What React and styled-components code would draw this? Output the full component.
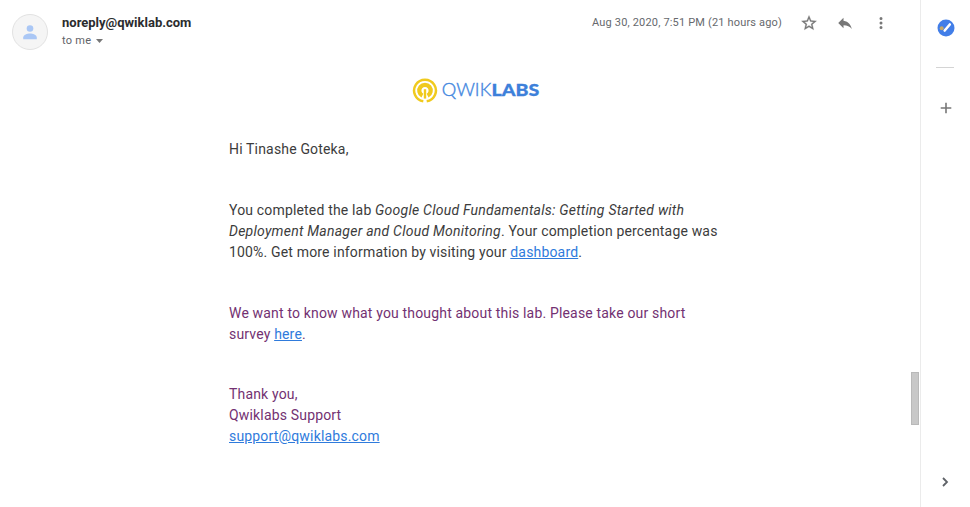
import React from "react";
import styled, { createGlobalStyle } from "styled-components";

const GlobalStyle = createGlobalStyle`
  * { box-sizing: border-box; }
  body { margin: 0; background: #fff; overflow: hidden; }
`;

const Page = styled.div`
  display: grid;
  grid-template-columns: 1fr 9px 50px;
  width: 970px;
  height: 507px;
  font-family: Roboto, sans-serif;
  background: #fff;
`;

const Message = styled.main`
  display: flex;
  flex-direction: column;
  min-width: 0;
`;

const Header = styled.header`
  display: flex;
  align-items: flex-start;
  height: 78px;
  padding: 14px 21px 0 12px;
`;

const Avatar = styled.div`
  display: grid;
  place-items: center;
  width: 36px;
  height: 36px;
  border: 1px solid #e2e2e2;
  border-radius: 50%;
  background: #f5f5f5;
`;

const Sender = styled.div`
  margin-left: 14px;
  flex: 1;
`;

const Address = styled.div`
  font-size: 13px;
  font-weight: 700;
  line-height: 18px;
  color: #2b2c2e;
`;

const Recipient = styled.div`
  display: flex;
  align-items: center;
  gap: 5px;
  font-size: 11px;
  line-height: 17px;
  letter-spacing: 0.25px;
  color: #5f6368;
`;

const Tools = styled.div`
  display: flex;
  align-items: center;
  height: 18px;
`;

const DateText = styled.span`
  margin-right: 18px;
  font-size: 11px;
  letter-spacing: 0.17px;
  line-height: 16px;
  color: #66696d;
  white-space: nowrap;
`;

const IconButton = styled.button`
  display: grid;
  place-items: center;
  width: 18px;
  height: 18px;
  margin: 0 0 0 ${(p) => p.$gap || "0"};
  padding: 0;
  border: 0;
  background: none;
  color: #777;
`;

const Logo = styled.div`
  display: flex;
  height: 25px;
  margin-left: 412px;
`;

const Body = styled.article`
  width: 500px;
  margin: 36px 0 0 229px;
  font-size: 14px;
  line-height: 21px;
  letter-spacing: 0.17px;
  color: #3c3c3c;
`;

const Paragraph = styled.p`
  margin: 0 0 ${(p) => p.$after || "40px"};
  color: ${(p) => (p.$quoted ? "#733172" : "#3c3c3c")};
`;

const LabTitle = styled.em`
  letter-spacing: 0.24px;
`;

const Link = styled.a`
  color: #2f7bdc;
  text-decoration: underline;
`;

const ScrollTrack = styled.div`
  padding: 372px 1px 0 0;
`;

const ScrollThumb = styled.div`
  height: 53px;
  border: 1px solid #b9b9b9;
  background: #c8c8c8;
`;

const SidePanel = styled.aside`
  display: flex;
  flex-direction: column;
  align-items: center;
  padding: 19px 0 16px;
  border-left: 1px solid #ebebeb;
`;

const Divider = styled.div`
  width: 18px;
  height: 1px;
  margin: 30px 1px 31px 0;
  background: #d4d4d4;
`;

const PanelToggle = styled(IconButton)`
  margin-top: auto;
  color: #5f6368;
`;

function PersonIcon() {
  return (
    <svg width="20" height="20" viewBox="0 0 20 20" fill="#aac7f5">
      <circle cx="10" cy="6.5" r="3.3" />
      <path d="M3.2 17.2v-1.6c0-2.7 4.2-4.1 6.8-4.1s6.8 1.4 6.8 4.1v1.6z" />
    </svg>
  );
}

function QwiklabsLogo() {
  return (
    <svg width="130" height="25" viewBox="0 0 130 25">
      <g fill="none" stroke="#f0ca1d">
        <path d="M11.3 23.3A10.9 10.9 0 1 1 14.7 23.3" strokeWidth="2.5" />
        <path d="M10.4 17.6A5.7 5.7 0 1 1 15.6 17.6" strokeWidth="4.2" />
        <path d="M13 11.2v9.4" strokeWidth="2.4" />
      </g>
      <text x="29.8" y="18.2" fill="#4689df" fontFamily="Lato, sans-serif" fontWeight="300" stroke="#4689df" strokeWidth="0.4" fontSize="17.5" textLength="49.5" lengthAdjust="spacingAndGlyphs">QWIK</text>
      <text x="79.6" y="18.2" fill="#3d80da" fontFamily="Lato, sans-serif" fontWeight="900" stroke="#3d80da" strokeWidth="0.3" fontSize="17.5" textLength="47.7" lengthAdjust="spacingAndGlyphs">LABS</text>
    </svg>
  );
}

function TasksIcon() {
  return (
    <svg width="18" height="18" viewBox="0 0 18 18">
      <circle cx="9" cy="9" r="8.5" fill="#427ee8" />
      <path d="M7.7 11.5l5.1-6" stroke="#fff" strokeWidth="2.6" strokeLinecap="round" />
      <circle cx="4.7" cy="9.2" r="2" fill="#c5a96a" />
    </svg>
  );
}

export default function App() {
  return (
    <>
      <GlobalStyle />
      <Page>
        <Message>
          <Header>
            <Avatar><PersonIcon /></Avatar>
            <Sender>
              <Address>noreply@qwiklab.com</Address>
              <Recipient>
                to me
                <svg width="7" height="4" viewBox="0 0 7 4"><path d="M0 0h7L3.5 4z" fill="#777" /></svg>
              </Recipient>
            </Sender>
            <Tools>
              <DateText>Aug 30, 2020, 7:51 PM (21 hours ago)</DateText>
              <IconButton aria-label="Star">
                <svg width="18" height="18" viewBox="0 0 24 24" fill="currentColor" stroke="currentColor" strokeWidth="0.4">
                  <path d="M22 9.24l-7.19-.62L12 2 9.19 8.63 2 9.24l5.46 4.73L5.82 21 12 17.27 18.18 21l-1.63-7.03L22 9.24zM12 15.4l-3.76 2.27 1-4.28-3.32-2.88 4.38-.38L12 6.1l1.71 4.04 4.38.38-3.32 2.88 1 4.28L12 15.4z" />
                </svg>
              </IconButton>
              <IconButton aria-label="Reply" $gap="18px">
                <svg width="18" height="18" viewBox="0 0 24 24" fill="currentColor">
                  <path d="M10 9V5l-7 7 7 7v-4.1c5 0 8.5 1.6 11 5.1-1-5-4-10-11-11z" />
                </svg>
              </IconButton>
              <IconButton aria-label="More" $gap="18px">
                <svg width="18" height="18" viewBox="0 0 24 24" fill="currentColor">
                  <path d="M12 8a2 2 0 1 0 0-4 2 2 0 0 0 0 4zm0 2a2 2 0 1 0 0 4 2 2 0 0 0 0-4zm0 6a2 2 0 1 0 0 4 2 2 0 0 0 0-4z" />
                </svg>
              </IconButton>
            </Tools>
          </Header>
          <Logo><QwiklabsLogo /></Logo>
          <Body>
            <Paragraph>Hi Tinashe Goteka,</Paragraph>
            <Paragraph>
              You completed the lab <LabTitle>Google Cloud Fundamentals: Getting Started with<br />
              Deployment Manager and Cloud Monitoring</LabTitle>. Your completion percentage was<br />
              100%. Get more information by visiting your <Link>dashboard</Link>.
            </Paragraph>
            <Paragraph $quoted $after="39px">
              We want to know what you thought about this lab. Please take our short<br />
              survey <Link>here</Link>.
            </Paragraph>
            <Paragraph $quoted>
              Thank you,<br />
              Qwiklabs Support<br />
              <Link>support@qwiklabs.com</Link>
            </Paragraph>
          </Body>
        </Message>
        <ScrollTrack><ScrollThumb /></ScrollTrack>
        <SidePanel>
          <TasksIcon />
          <Divider />
          <IconButton aria-label="Get add-ons">
            <svg width="18" height="18" viewBox="0 0 18 18"><path d="M9 3.7v10.6M3.7 9h10.6" stroke="#777" strokeWidth="1.6" /></svg>
          </IconButton>
          <PanelToggle aria-label="Hide side panel">
            <svg width="18" height="18" viewBox="0 0 18 18" fill="none"><path d="M6 5l4 4-4 4" stroke="currentColor" strokeWidth="1.8" /></svg>
          </PanelToggle>
        </SidePanel>
      </Page>
    </>
  );
}
